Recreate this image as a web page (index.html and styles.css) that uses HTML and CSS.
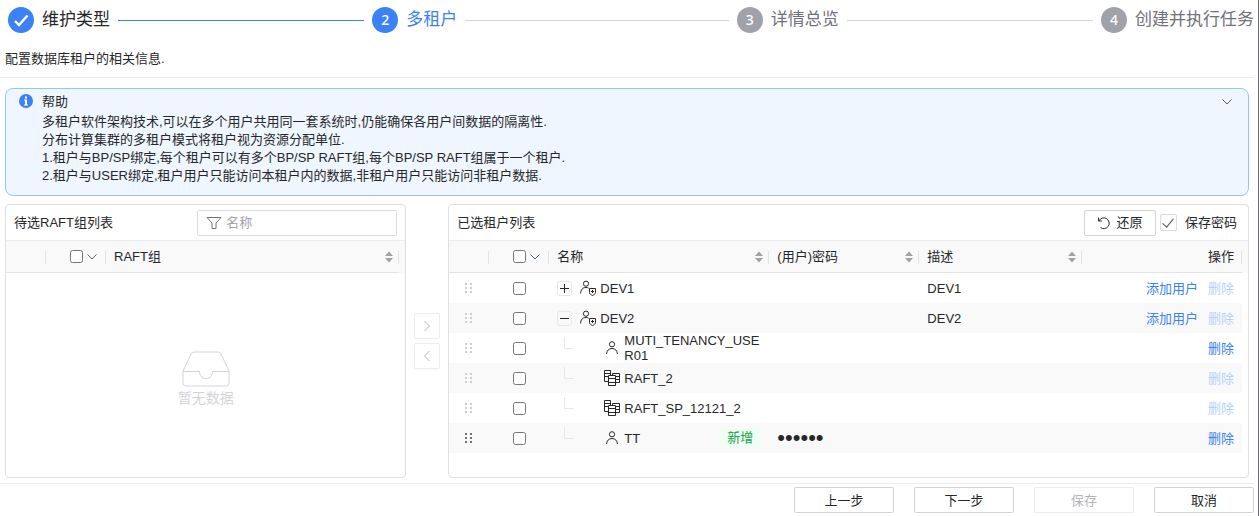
FILE: index.html
```html
<!doctype html>
<html lang="zh-CN">

<head>
    <meta charset="utf-8">
    <title>多租户</title>
    <meta name="viewport" content="width=device-width,initial-scale=1">
    <link rel="stylesheet" href="styles.css">
</head>

<body>
    <!-- shared icons -->
    <svg class="sprite" aria-hidden="true">
        <symbol id="i-down" viewBox="0 0 12 12">
            <path d="M1.500 3.500L6 8l4.500-4.500" />
        </symbol>
        <symbol id="i-sort" viewBox="0 0 10 12">
            <path d="M5 .5L9 5H1zM5 11.500L9 7H1z" />
        </symbol>
        <symbol id="i-drag" viewBox="0 0 8 10">
            <path d="M0 0h2v2H0zM5 0h2v2H5zM0 4h2v2H0zM5 4h2v2H5zM0 8h2v2H0zM5 8h2v2H5z" />
        </symbol>
        <symbol id="i-user" viewBox="0 0 16 16">
            <circle cx="8" cy="4.300" r="2.600" />
            <path d="M2.500 14C2.800 10.600 4.800 8.500 8 8.500s5.200 2.100 5.500 5.500" />
        </symbol>
        <symbol id="i-tenant" viewBox="0 0 18 16">
            <circle cx="7" cy="3.700" r="2.600" />
            <path d="M1.500 13.500C1.800 9.800 3.500 7.500 7 7.500c1 0 1.800.2 2.600.6" />
            <path d="M10.500 8.500h6v4c0 1.300-1.500 2.300-3 3-1.500-.7-3-1.700-3-3z" />
            <path d="M13.500 10v3M12 11.500h3" />
        </symbol>
        <symbol id="i-raft" viewBox="0 0 16 16">
            <path d="M4.500 11.500h-4V.5h6v5M.5 3.500h6M.5 6.500h4" />
            <path d="M8.500 5.500v-2h7v9h-4M11.500 6.500h4M11.500 9.500h4" />
            <path d="M4.500 5.500h7v10h-7zM4.500 8.500h7M4.500 12.500h7" />
        </symbol>
    </svg>

    <div class="page">
        <ol class="steps">
            <li class="step done">
                <span class="step-icon">
                    <svg viewBox="0 0 26 26" aria-label="已完成">
                        <path d="M7 14l4 4 8.500-9.500" />
                    </svg>
                </span>
                <span class="step-title">维护类型</span>
            </li>
            <li class="step active" aria-current="step">
                <span class="step-icon">2</span>
                <span class="step-title">多租户</span>
            </li>
            <li class="step">
                <span class="step-icon">3</span>
                <span class="step-title">详情总览</span>
            </li>
            <li class="step">
                <span class="step-icon">4</span>
                <span class="step-title">创建并执行任务</span>
            </li>
        </ol>
        <p class="desc">配置数据库租户的相关信息.</p>

        <main class="content">
            <section class="help">
                <svg class="help-icon" viewBox="0 0 14 14" aria-hidden="true">
                    <circle cx="7" cy="7" r="7" />
                    <path d="M6 2.500h2v2H6zM5 5.500h3v5h1v1H5v-1h1v-4H5z" />
                </svg>
                <div class="help-body">
                    <h2 class="help-title">帮助</h2>
                    <p>多租户软件架构技术,可以在多个用户共用同一套系统时,仍能确保各用户间数据的隔离性.</p>
                    <p>分布计算集群的多租户模式将租户视为资源分配单位.</p>
                    <p>1.租户与BP/SP绑定,每个租户可以有多个BP/SP RAFT组,每个BP/SP RAFT组属于一个租户.</p>
                    <p>2.租户与USER绑定,租户用户只能访问本租户内的数据,非租户用户只能访问非租户数据.</p>
                </div>
                <button class="icon-button" type="button" aria-label="收起帮助"><svg class="down brown"><use href="#i-down" /></svg></button>
            </section>

            <div class="transfer">
                <section class="panel panel-source">
                    <header class="toolbar">
                        <h3 class="toolbar-title">待选RAFT组列表</h3>
                        <label class="filter">
                            <svg viewBox="0 0 16 14" aria-hidden="true">
                                <path d="M1 1.500h14L10 7v5.500H6V7z" />
                            </svg>
                            <input type="text" placeholder="名称" aria-label="名称">
                        </label>
                    </header>
                    <div class="table-wrap">
                        <table>
                            <colgroup>
                                <col class="col-drag">
                                <col class="col-check">
                                <col>
                            </colgroup>
                            <thead>
                                <tr>
                                    <th></th>
                                    <th class="check-cell"><div class="check-all"><input type="checkbox" aria-label="全选"><svg class="down brown"><use href="#i-down" /></svg></div></th>
                                    <th><div class="th-inner">RAFT组<svg class="sort"><use href="#i-sort" /></svg></div></th>
                                </tr>
                            </thead>
                        </table>
                    </div>
                    <div class="empty">
                        <svg viewBox="0 0 48 36" aria-hidden="true">
                            <path d="M1 20L9 3q1-2 3-2h24q2 0 3 2l8 17v12q0 3-3 3H4q-3 0-3-3zM1 20.500h16.500c0 4 2.500 7 6.500 7s6.500-3 6.500-7H47" />
                        </svg>
                        <span>暂无数据</span>
                    </div>
                </section>

                <div class="transfer-buttons">
                    <button type="button" disabled aria-label="移到右侧"><svg viewBox="0 0 12 12"><path d="M3.500 1L8.500 6l-5 5" /></svg></button>
                    <button type="button" disabled aria-label="移到左侧"><svg viewBox="0 0 12 12"><path d="M8.500 1L3.500 6l5 5" /></svg></button>
                </div>

                <section class="panel panel-target">
                    <header class="toolbar">
                        <h3 class="toolbar-title">已选租户列表</h3>
                        <div class="toolbar-actions">
                            <button class="button restore" type="button">
                                <svg viewBox="0 0 14 14" aria-hidden="true">
                                    <path d="M1.500 1.500v3.500H5M2 4.800A5.400 5.400 0 1 1 3.500 11.500" />
                                </svg>
                                还原
                            </button>
                            <label class="save-password"><input type="checkbox" checked>保存密码</label>
                        </div>
                    </header>
                    <div class="table-wrap">
                        <table>
                            <colgroup>
                                <col class="col-drag">
                                <col class="col-check">
                                <col class="col-name">
                                <col class="col-password">
                                <col>
                                <col class="col-action">
                            </colgroup>
                            <thead>
                                <tr>
                                    <th></th>
                                    <th class="check-cell"><div class="check-all"><input type="checkbox" aria-label="全选"><svg class="down slate"><use href="#i-down" /></svg></div></th>
                                    <th><div class="th-inner">名称<svg class="sort"><use href="#i-sort" /></svg></div></th>
                                    <th><div class="th-inner">(用户)密码<svg class="sort"><use href="#i-sort" /></svg></div></th>
                                    <th><div class="th-inner">描述<svg class="sort"><use href="#i-sort" /></svg></div></th>
                                    <th class="actions">操作</th>
                                </tr>
                            </thead>
                            <tbody>
                                <tr>
                                    <td class="drag"><svg><use href="#i-drag" /></svg></td>
                                    <td class="check-cell"><input type="checkbox" aria-label="DEV1"></td>
                                    <td><div class="name"><button class="toggle plus" type="button" aria-label="展开"></button><svg class="tenant"><use href="#i-tenant" /></svg><span>DEV1</span></div></td>
                                    <td></td>
                                    <td>DEV1</td>
                                    <td class="actions"><button class="link" type="button">添加用户</button><button class="link" type="button" disabled>删除</button></td>
                                </tr>
                                <tr>
                                    <td class="drag"><svg><use href="#i-drag" /></svg></td>
                                    <td class="check-cell"><input type="checkbox" aria-label="DEV2"></td>
                                    <td><div class="name"><button class="toggle" type="button" aria-label="收起"></button><svg class="tenant"><use href="#i-tenant" /></svg><span>DEV2</span></div></td>
                                    <td></td>
                                    <td>DEV2</td>
                                    <td class="actions"><button class="link" type="button">添加用户</button><button class="link" type="button" disabled>删除</button></td>
                                </tr>
                                <tr>
                                    <td class="drag"><svg><use href="#i-drag" /></svg></td>
                                    <td class="check-cell"><input type="checkbox" aria-label="MUTI_TENANCY_USER01"></td>
                                    <td><div class="name child"><svg class="type"><use href="#i-user" /></svg><span>MUTI_TENANCY_USER01</span></div></td>
                                    <td></td>
                                    <td></td>
                                    <td class="actions"><button class="link" type="button">删除</button></td>
                                </tr>
                                <tr>
                                    <td class="drag"><svg><use href="#i-drag" /></svg></td>
                                    <td class="check-cell"><input type="checkbox" aria-label="RAFT_2"></td>
                                    <td><div class="name child"><svg class="type"><use href="#i-raft" /></svg><span>RAFT_2</span></div></td>
                                    <td></td>
                                    <td></td>
                                    <td class="actions"><button class="link" type="button" disabled>删除</button></td>
                                </tr>
                                <tr>
                                    <td class="drag"><svg><use href="#i-drag" /></svg></td>
                                    <td class="check-cell"><input type="checkbox" aria-label="RAFT_SP_12121_2"></td>
                                    <td><div class="name child"><svg class="type"><use href="#i-raft" /></svg><span>RAFT_SP_12121_2</span></div></td>
                                    <td></td>
                                    <td></td>
                                    <td class="actions"><button class="link" type="button" disabled>删除</button></td>
                                </tr>
                                <tr>
                                    <td class="drag enabled"><svg><use href="#i-drag" /></svg></td>
                                    <td class="check-cell"><input type="checkbox" aria-label="TT"></td>
                                    <td><div class="name child"><svg class="type"><use href="#i-user" /></svg><span>TT</span><em class="tag">新增</em></div></td>
                                    <td><input class="password" type="password" value="123456" aria-label="TT 密码"></td>
                                    <td></td>
                                    <td class="actions"><button class="link" type="button">删除</button></td>
                                </tr>
                            </tbody>
                        </table>
                    </div>
                </section>
            </div>
        </main>

        <footer class="footer">
            <button class="button" type="button">上一步</button>
            <button class="button" type="button">下一步</button>
            <button class="button" type="button" disabled>保存</button>
            <button class="button" type="button">取消</button>
        </footer>
    </div>
</body>

</html>
```
FILE: styles.css
```css
* {
    box-sizing: border-box;
}

body {
    margin: 0;
    font-family: "Liberation Sans", "Noto Sans CJK SC", sans-serif;
    font-size: 13px;
    line-height: 18px;
    color: #27272a;
    background: #fff;
}

h2,
h3,
p,
ol {
    margin: 0;
    padding: 0;
    font-size: 13px;
    font-weight: normal;
}

button,
input {
    font: inherit;
    color: inherit;
}

input[type="checkbox"] {
    margin: 0;
    width: 13px;
    height: 13px;
}

svg {
    flex: none;
    fill: none;
    stroke: currentColor;
}

.sprite {
    display: none;
}

.page {
    display: flex;
    flex-direction: column;
    min-height: 100vh;
    padding-right: 4px;
    border-right: 1px solid #6b6b6f;
}

/* Steps */
.steps {
    display: flex;
    height: 40px;
    list-style: none;
}

.step {
    display: flex;
    flex: 1;
    align-items: center;
    gap: 8px;
    padding-left: 8px;
    color: #71717a;
    white-space: nowrap;
}

.step:last-child {
    flex: none;
}

.step:not(:last-child)::after {
    content: "";
    flex: 1;
    height: 1px;
    background: #d4d4d8;
}

.step.done::after {
    background: #3b82f6;
}

.step-icon {
    width: 26px;
    height: 26px;
    border-radius: 50%;
    background: #a1a1aa;
    color: #fff;
    font-family: "Noto Sans", sans-serif;
    font-size: 14px;
    font-weight: 500;
    line-height: 26px;
    text-align: center;
}

.step-icon svg {
    display: block;
    stroke-width: 2.4;
}

.step-title {
    font-size: 17px;
    line-height: 26px;
}

.step.active {
    color: #3b82f6;
}

.step.done {
    color: #27272a;
}

.step.done .step-icon,
.step.active .step-icon {
    background: #3b82f6;
}

.desc {
    height: 38px;
    padding: 10px 5px;
    border-bottom: 1px solid #ececee;
}

.content {
    display: flex;
    flex: 1;
    flex-direction: column;
    gap: 8px;
    padding: 10px 5px 5px;
}

/* Help box */
.help {
    display: flex;
    align-items: flex-start;
    padding: 4px 14px 10px 13px;
    border: 1px solid #93c5fd;
    border-radius: 8px;
    background: #eff6ff;
}

.help-icon {
    width: 14px;
    height: 14px;
    margin: 1px 9px 0 0;
    fill: #fff;
    stroke: none;
}

.help-icon circle {
    fill: #3b82f6;
}

.help-body {
    flex: 1;
}

.help-title {
    margin-bottom: 2px;
}

.icon-button {
    display: flex;
    padding: 3px 1px;
    border: none;
    background: none;
    cursor: pointer;
}

.down {
    width: 12px;
    height: 12px;
}

.icon-button .down,
.down.brown {
    color: #6f5a45;
}

.down.slate {
    color: #456482;
}

/* Panels */
.transfer {
    display: flex;
    flex: 1;
}

.panel {
    display: flex;
    flex-direction: column;
    min-width: 0;
    border: 1px solid #e0e0e3;
    border-radius: 4px;
}

.panel-source {
    flex: 1;
}

.panel-target {
    flex: 2;
}

.toolbar {
    display: flex;
    align-items: center;
    justify-content: space-between;
    height: 36px;
    padding: 0 8px;
    border-bottom: 1px solid #ececee;
}

.filter {
    display: flex;
    align-items: center;
    gap: 4px;
    width: 200px;
    height: 26px;
    padding: 0 8px;
    border: 1px solid #dcdce0;
    border-radius: 2px;
    color: #71717a;
}

.filter svg {
    width: 16px;
    height: 14px;
}

.filter input {
    flex: 1;
    min-width: 0;
    padding: 0;
    border: none;
    outline: none;
    background: none;
}

.filter input::placeholder {
    color: #a1a1aa;
}

.toolbar-actions {
    display: flex;
    align-items: center;
    gap: 4px;
    padding-right: 3px;
}

.save-password {
    display: flex;
    align-items: center;
    gap: 8px;
}

.save-password input {
    display: flex;
    justify-content: center;
    appearance: none;
    width: 17px;
    height: 17px;
    border: 1px solid #dcdce0;
    border-radius: 2px;
}

.save-password input:checked::after {
    content: "";
    width: 5px;
    height: 10px;
    margin-top: 1px;
    border: solid #52525b;
    border-width: 0 1px 1px 0;
    transform: rotate(40deg);
}

.transfer-buttons {
    display: flex;
    flex-direction: column;
    align-items: center;
    justify-content: center;
    gap: 4px;
    width: 42px;
}

.transfer-buttons button {
    display: flex;
    align-items: center;
    justify-content: center;
    width: 26px;
    height: 26px;
    padding: 0;
    border: 1px solid #ececee;
    border-radius: 2px;
    background: #fff;
    color: #b4b4b8;
}

.transfer-buttons svg {
    width: 12px;
    height: 12px;
}

/* Tables */
.table-wrap {
    padding-right: 6px;
}

table {
    width: 100%;
    table-layout: fixed;
    border-collapse: separate;
    border-spacing: 0;
}

.col-drag {
    width: 40px;
}

.col-check {
    width: 60px;
}

.col-name {
    width: 220px;
}

.col-password {
    width: 150px;
}

.col-action {
    width: 160px;
}

th {
    position: relative;
    height: 32px;
    padding: 0 8px;
    border-bottom: 1px solid #e4e4e7;
    background: #f9f9f9;
    font-weight: normal;
    text-align: left;
}

th::after {
    content: "";
    position: absolute;
    top: 10px;
    right: 0;
    width: 1px;
    height: 13px;
    background: #e4e4e7;
}

th:last-child {
    box-shadow: 6px 0 0 #f9f9f9;
}

td {
    height: 30px;
    padding: 0 8px;
    line-height: 15px;
}

tbody tr:nth-child(even) {
    background: #f9f9f9;
}

.th-inner,
.check-all {
    display: flex;
    align-items: center;
}

.th-inner {
    justify-content: space-between;
    margin-right: -3px;
}

.check-all {
    justify-content: flex-end;
    gap: 3px;
}

th.check-cell {
    padding: 0 8px 0 0;
}

td.check-cell {
    padding: 0 0 0 1px;
}

td.check-cell input {
    display: block;
    margin: 0 auto;
}

.sort {
    width: 10px;
    height: 12px;
    fill: #a1a1aa;
    stroke: none;
}

.drag {
    color: #cfcfd2;
}

.drag.enabled {
    color: #71717a;
}

.drag svg {
    display: block;
    width: 8px;
    height: 10px;
    margin: 0 auto;
    fill: currentColor;
    stroke: none;
}

.name {
    display: flex;
    align-items: center;
    overflow-wrap: anywhere;
}

.toggle {
    flex: none;
    width: 15px;
    height: 15px;
    margin-right: 7px;
    border: 1px solid #e8e8ea;
    border-radius: 3px;
    background: linear-gradient(#27272a, #27272a) center / 9px 1px no-repeat;
}

.toggle.plus {
    background:
        linear-gradient(#27272a, #27272a) center / 9px 1px no-repeat,
        linear-gradient(#27272a, #27272a) center / 1px 9px no-repeat;
}

.tenant {
    width: 18px;
    height: 16px;
    margin-right: 3px;
}

.type {
    width: 16px;
    height: 16px;
    margin-right: 4px;
}

/* elbow of the tree line */
.child::before {
    content: "";
    flex: none;
    width: 9px;
    height: 11px;
    margin: 0 30px 10px 7px;
    border: solid #e8e8ea;
    border-width: 0 0 1px 1px;
}

.tag {
    flex: none;
    margin-left: auto;
    padding: 0 8px;
    border-radius: 2px;
    background: #f0fdf4;
    color: #16a34a;
    font-style: normal;
    line-height: 20px;
}

.password {
    display: block;
    width: 100%;
    height: 20px;
    padding: 0;
    border: none;
    outline: none;
    background: none;
    font-size: 22px;
    line-height: 20px;
}

.actions {
    text-align: right;
    white-space: nowrap;
}

.link {
    padding: 0;
    margin-left: 10px;
    border: none;
    background: none;
    color: #3b82f6;
    cursor: pointer;
}

.link:disabled {
    color: #b7d1fb;
    cursor: default;
}

.empty {
    display: flex;
    flex: 1;
    flex-direction: column;
    align-items: center;
    justify-content: center;
    gap: 2px;
    padding-top: 8px;
    color: #d4d4d8;
    font-size: 14px;
}

.empty svg {
    width: 48px;
    height: 36px;
}

/* Buttons */
.button {
    min-width: 100px;
    height: 26px;
    padding: 1px 0 0;
    border: 1px solid #d4d4d8;
    border-radius: 2px;
    background: #fff;
    cursor: pointer;
}

.button:disabled {
    border-color: #ececee;
    color: #b4b4b8;
    cursor: default;
}

.restore {
    display: flex;
    align-items: center;
    justify-content: center;
    gap: 5px;
    min-width: 72px;
}

.restore svg {
    width: 14px;
    height: 14px;
}

.footer {
    display: flex;
    justify-content: flex-end;
    gap: 20px;
    padding: 3px 0;
    border-top: 1px solid #ececee;
}
```
